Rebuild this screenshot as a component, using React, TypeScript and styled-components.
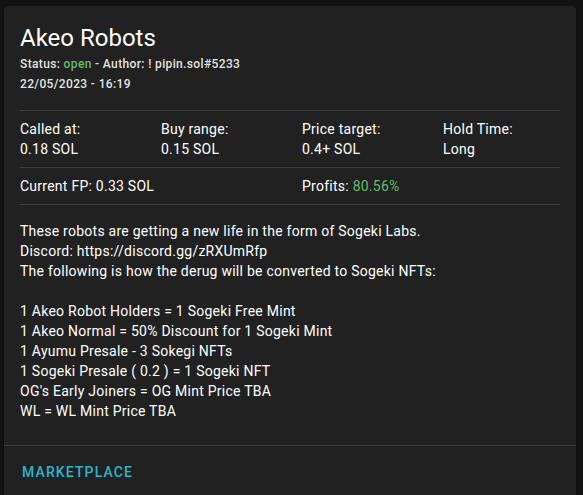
import React from "react";
import styled, {createGlobalStyle} from "styled-components";


const GlobalStyle = createGlobalStyle`
	html, body {
		margin: 0;
		padding: 0;
		background: #121212;
		font-family: Roboto, "Liberation Sans", Arial, sans-serif;
		color: #fff;
	}
`;

const Page = styled.div`
	padding: 6px 7px 0 4px;
	min-height: 495px;
	box-sizing: border-box;
`;

const Card = styled.div`
	background: #212121;
	border-radius: 4px;
	overflow: hidden;
	box-shadow: 0 2px 1px -1px rgba(0,0,0,0.2), 0 1px 1px 0 rgba(0,0,0,0.14), 0 1px 3px 0 rgba(0,0,0,0.12);
`;

const Content = styled.div`
	padding: 16px 16px 24px 16px;
`;

const Title = styled.h2`
	margin: 0;
	font-size: 24px;
	font-weight: 400;
	line-height: 32px;
`;

const Caption = styled.div`
	font-size: 12px;
	font-weight: 500;
	line-height: 20px;
	letter-spacing: 0.03em;
	color: rgba(255,255,255,0.9);
`;

const Green = styled.span`
	color: #66bb6a;
`;

const Divider = styled.hr<{$top?: number; $bottom?: number}>`
	border: none;
	height: 1px;
	background: rgba(255,255,255,0.12);
	margin: ${p => p.$top ?? 8}px 0 ${p => p.$bottom ?? 8}px 0;
`;

const Grid = styled.div<{$cols: number}>`
	display: grid;
	grid-template-columns: repeat(${p => p.$cols}, 1fr);
	column-gap: 24px;
`;

const Cell = styled.div`
	font-size: 14px;
	line-height: 20px;
	letter-spacing: 0.25px;
`;

const Description = styled.div`
	font-size: 14px;
	line-height: 20px;
	letter-spacing: 0.25px;
	white-space: pre-line;
`;

const Actions = styled.div`
	border-top: 1px solid rgba(255,255,255,0.12);
	padding: 8px 8px 8px 10px;
	display: flex;
	align-items: center;
`;

const TextButton = styled.button`
	background: none;
	border: none;
	padding: 6px 8px;
	min-height: 36px;
	font-family: inherit;
	font-size: 14px;
	font-weight: 500;
	letter-spacing: 0.08em;
	text-transform: uppercase;
	color: #2db5cc;
	cursor: pointer;
	border-radius: 4px;
`;

const stats = [
	{label: "Called at:", value: "0.18 SOL"},
	{label: "Buy range:", value: "0.15 SOL"},
	{label: "Price target:", value: "0.4+ SOL"},
	{label: "Hold Time:", value: "Long"},
];

const description = `These robots are getting a new life in the form of Sogeki Labs.
Discord: https://discord.gg/zRXUmRfp
The following is how the derug will be converted to Sogeki NFTs:

1 Akeo Robot Holders = 1 Sogeki Free Mint
1 Akeo Normal = 50% Discount for 1 Sogeki Mint
1 Ayumu Presale - 3 Sokegi NFTs
1 Sogeki Presale ( 0.2 ) = 1 Sogeki NFT
OG's Early Joiners = OG Mint Price TBA
WL = WL Mint Price TBA`;


export default function App() {
	return (
		<>
			<GlobalStyle/>
			<Page>
				<Card>
					<Content>
						<Title>Akeo Robots</Title>
						<Caption>Status: <Green>open</Green> - Author: ! pipin.sol#5233</Caption>
						<Caption>22/05/2023 - 16:19</Caption>

						<Divider $top={16}/>
						<Grid $cols={4}>
							{stats.map(s => (
								<div key={s.label}>
									<Cell>{s.label}</Cell>
									<Cell>{s.value}</Cell>
								</div>
							))}
						</Grid>
						<Divider/>
						<Grid $cols={2}>
							<Cell>Current FP: 0.33 SOL</Cell>
							<Cell>Profits: <Green>80.56%</Green></Cell>
						</Grid>
						<Divider $bottom={16}/>

						<Description>{description}</Description>
					</Content>
					<Actions>
						<TextButton type="button">Marketplace</TextButton>
					</Actions>
				</Card>
			</Page>
		</>
	);
}
